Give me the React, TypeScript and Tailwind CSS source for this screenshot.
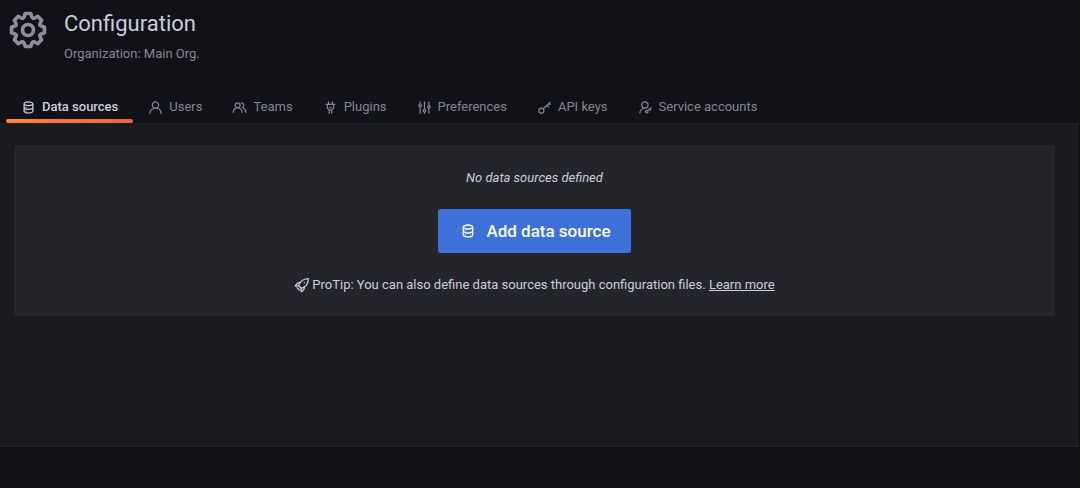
import type { ReactNode } from 'react';

const paths = {
  cog: 'M21.32,9.55l-1.89-.63.89-1.78A1,1,0,0,0,20.13,6L18,3.87a1,1,0,0,0-1.15-.19l-1.78.89-.63-1.89A1,1,0,0,0,13.5,2h-3a1,1,0,0,0-.95.68L8.92,4.57,7.14,3.68A1,1,0,0,0,6,3.87L3.87,6a1,1,0,0,0-.19,1.15l.89,1.78-1.89.63A1,1,0,0,0,2,10.5v3a1,1,0,0,0,.68.95l1.89.63-.89,1.78A1,1,0,0,0,3.87,18L6,20.13a1,1,0,0,0,1.15.19l1.78-.89.63,1.89a1,1,0,0,0,.95.68h3a1,1,0,0,0,.95-.68l.63-1.89,1.78.89A1,1,0,0,0,18,20.13L20.13,18a1,1,0,0,0,.19-1.15l-.89-1.78,1.89-.63A1,1,0,0,0,22,13.5v-3A1,1,0,0,0,21.32,9.55ZM20,12.78l-1.2.4A2,2,0,0,0,17.64,16l.57,1.14-1.1,1.1L16,17.64a2,2,0,0,0-2.79,1.16l-.4,1.2H11.22l-.4-1.2A2,2,0,0,0,8,17.64l-1.14.57-1.1-1.1L6.36,16A2,2,0,0,0,5.2,13.18L4,12.78V11.22l1.2-.4A2,2,0,0,0,6.36,8L5.79,6.89l1.1-1.1L8,6.36A2,2,0,0,0,10.82,5.2l.4-1.2h1.56l.4,1.2A2,2,0,0,0,16,6.36l1.14-.57,1.1,1.1L17.64,8a2,2,0,0,0,1.16,2.79l1.2.4ZM12,8a4,4,0,1,0,4,4A4,4,0,0,0,12,8Zm0,6a2,2,0,1,1,2-2A2,2,0,0,1,12,14Z',
  database:
    'M8,16.5a1,1,0,1,0,1,1A1,1,0,0,0,8,16.5ZM12,2C8,2,4,3.37,4,6V18c0,2.63,4,4,8,4s8-1.37,8-4V6C20,3.37,16,2,12,2Zm6,16c0,.71-2.28,2-6,2s-6-1.29-6-2V14.73A13.16,13.16,0,0,0,12,16a13.16,13.16,0,0,0,6-1.27Zm0-6c0,.71-2.28,2-6,2s-6-1.29-6-2V8.73A13.16,13.16,0,0,0,12,10a13.16,13.16,0,0,0,6-1.27ZM12,8C8.28,8,6,6.71,6,6s2.28-2,6-2,6,1.29,6,2S15.72,8,12,8ZM8,10.5a1,1,0,1,0,1,1A1,1,0,0,0,8,10.5Z',
  user: 'M15.71,12.71a6,6,0,1,0-7.42,0,10,10,0,0,0-6.22,8.18,1,1,0,0,0,2,.22,8,8,0,0,1,15.9,0,1,1,0,0,0,1,.89h.11a1,1,0,0,0,.88-1.1A10,10,0,0,0,15.71,12.71ZM12,12a4,4,0,1,1,4-4A4,4,0,0,1,12,12Z',
  users:
    'M12.3,12.22A4.92,4.92,0,0,0,14,8.5a5,5,0,0,0-10,0,4.92,4.92,0,0,0,1.7,3.72A8,8,0,0,0,1,19.5a1,1,0,0,0,2,0,6,6,0,0,1,12,0,1,1,0,0,0,2,0A8,8,0,0,0,12.3,12.22ZM9,11.5a3,3,0,1,1,3-3A3,3,0,0,1,9,11.5Zm9.74.32A5,5,0,0,0,15,3.5a1,1,0,0,0,0,2,3,3,0,0,1,3,3,3,3,0,0,1-1.5,2.59,1,1,0,0,0-.5.84,1,1,0,0,0,.45.86l.39.26.13.07a7,7,0,0,1,4,6.38,1,1,0,0,0,2,0A9,9,0,0,0,18.74,11.82Z',
  plug: 'M19,6H16V3a1,1,0,0,0-2,0V6H10V3A1,1,0,0,0,8,3V6H5A1,1,0,0,0,5,8H6v5a1,1,0,0,0,.29.71L9,16.41V21a1,1,0,0,0,2,0V17h2v4a1,1,0,0,0,2,0V16.41l2.71-2.7A1,1,0,0,0,18,13V8h1a1,1,0,0,0,0-2Zm-3,6.59L13.59,15H10.41L8,12.59V8h8ZM11,13h2a1,1,0,0,0,0-2H11a1,1,0,0,0,0,2Z',
  sliders:
    'M20,8.18V3a1,1,0,0,0-2,0V8.18a3,3,0,0,0,0,5.64V21a1,1,0,0,0,2,0V13.82a3,3,0,0,0,0-5.64ZM19,12a1,1,0,1,1,1-1A1,1,0,0,1,19,12Zm-6,2.18V3a1,1,0,0,0-2,0V14.18a3,3,0,0,0,0,5.64V21a1,1,0,0,0,2,0V19.82a3,3,0,0,0,0-5.64ZM12,18a1,1,0,1,1,1-1A1,1,0,0,1,12,18ZM6,6.18V3A1,1,0,0,0,4,3V6.18a3,3,0,0,0,0,5.64V21a1,1,0,0,0,2,0V11.82A3,3,0,0,0,6,6.18ZM5,10A1,1,0,1,1,6,9,1,1,0,0,1,5,10Z',
};

function Glyph({ d, className }: { d: string; className: string }) {
  return (
    <svg viewBox="0 0 24 24" fill="currentColor" aria-hidden="true" className={className}>
      <path d={d} />
    </svg>
  );
}

function Outline({ children, className }: { children: ReactNode; className: string }) {
  return (
    <svg
      viewBox="0 0 24 24"
      fill="none"
      stroke="currentColor"
      strokeWidth="2"
      strokeLinecap="round"
      strokeLinejoin="round"
      aria-hidden="true"
      className={className}
    >
      {children}
    </svg>
  );
}

const tabIcon = 'size-[15px] shrink-0';

const tabs: { label: string; icon: ReactNode }[] = [
  { label: 'Data sources', icon: <Glyph d={paths.database} className={tabIcon} /> },
  { label: 'Users', icon: <Glyph d={paths.user} className={tabIcon} /> },
  { label: 'Teams', icon: <Glyph d={paths.users} className={tabIcon} /> },
  { label: 'Plugins', icon: <Glyph d={paths.plug} className={tabIcon} /> },
  { label: 'Preferences', icon: <Glyph d={paths.sliders} className={tabIcon} /> },
  {
    label: 'API keys',
    icon: (
      <Outline className={tabIcon}>
        <circle cx="7" cy="17" r="4" />
        <path d="M9.9 14.1 21 4M16 8.5l2.5 2.5M19.5 5.5l1.5 2" />
      </Outline>
    ),
  },
  {
    label: 'Service accounts',
    icon: (
      <Outline className={tabIcon}>
        <circle cx="11" cy="8" r="5" />
        <path d="M3 21a8.5 8.5 0 0 1 8-8" />
        <circle cx="14" cy="18.5" r="2" />
        <path d="M15.5 17 21 12.5M18.5 15l1.5 1.5" />
      </Outline>
    ),
  },
];

export default function App() {
  return (
    <div className="flex min-h-screen flex-col bg-[#111217] font-[Roboto,sans-serif] text-[13px] leading-5 text-[#ccccdc]">
      <header className="border-b border-[#202226]">
        <div className="flex gap-3.5 px-1.5 pt-2">
          <Glyph d={paths.cog} className="size-11 shrink-0 text-[#8e8e99]" />
          <div>
            <h1 className="text-[22px] leading-8">Configuration</h1>
            <p className="mt-1 text-[#85858f]">Organization: Main Org.</p>
          </div>
        </div>
        <nav aria-label="Configuration" className="mt-7 flex px-1.5">
          {tabs.map((tab, i) => (
            <a
              key={tab.label}
              href="#"
              aria-current={i === 0 ? 'page' : undefined}
              className={
                i === 0
                  ? 'relative flex items-center gap-1.5 px-[15px] pt-[5px] pb-1.5 font-medium'
                  : 'relative flex items-center gap-1.5 px-[15px] pt-[5px] pb-1.5 text-[#85858f]'
              }
            >
              {tab.icon}
              {tab.label}
              {i === 0 && (
                <span className="absolute inset-x-0 bottom-0 h-1 rounded-sm bg-linear-to-r from-[#ff8833] to-[#f55f3e]" />
              )}
            </a>
          ))}
        </nav>
      </header>

      <main className="mr-0.5 flex-1 border-r border-[#202226] bg-[#1a1b1f] pt-[21px] pr-[22px] pl-3.5">
        <section className="flex flex-col items-center rounded-sm bg-[#23252b] px-4 pt-[23px] pb-[21px]">
          <p className="italic">No data sources defined</p>
          <a
            href="#"
            className="mt-[21px] flex h-11 items-center gap-2.5 rounded-xs bg-[#3d71d9] pr-5 pl-[22px] text-[17px] font-medium text-white"
          >
            <Glyph d={paths.database} className="size-4" />
            Add data source
          </a>
          <p className="mt-[22px] flex items-center gap-0.5">
            <Outline className="size-4">
              <path d="M7 13C9 6 13.5 3 21.5 2.5 21.5 10.5 18 15 11 17z" />
              <path d="M15.5 8.4v.2" />
              <path d="M9.5 8.500C6 8 3.500 10 2 13.500l5-.5M4.500 16l3.500 3.500M11 17l-.5 5c3.500-1.500 5.500-4 5-7.500" />
            </Outline>
            <span>
              ProTip: You can also define data sources through configuration files.{' '}
              <a href="#" className="underline">
                Learn more
              </a>
            </span>
          </p>
        </section>
      </main>

      <footer className="h-[42px] border-t border-[#202226]" />
    </div>
  );
}
